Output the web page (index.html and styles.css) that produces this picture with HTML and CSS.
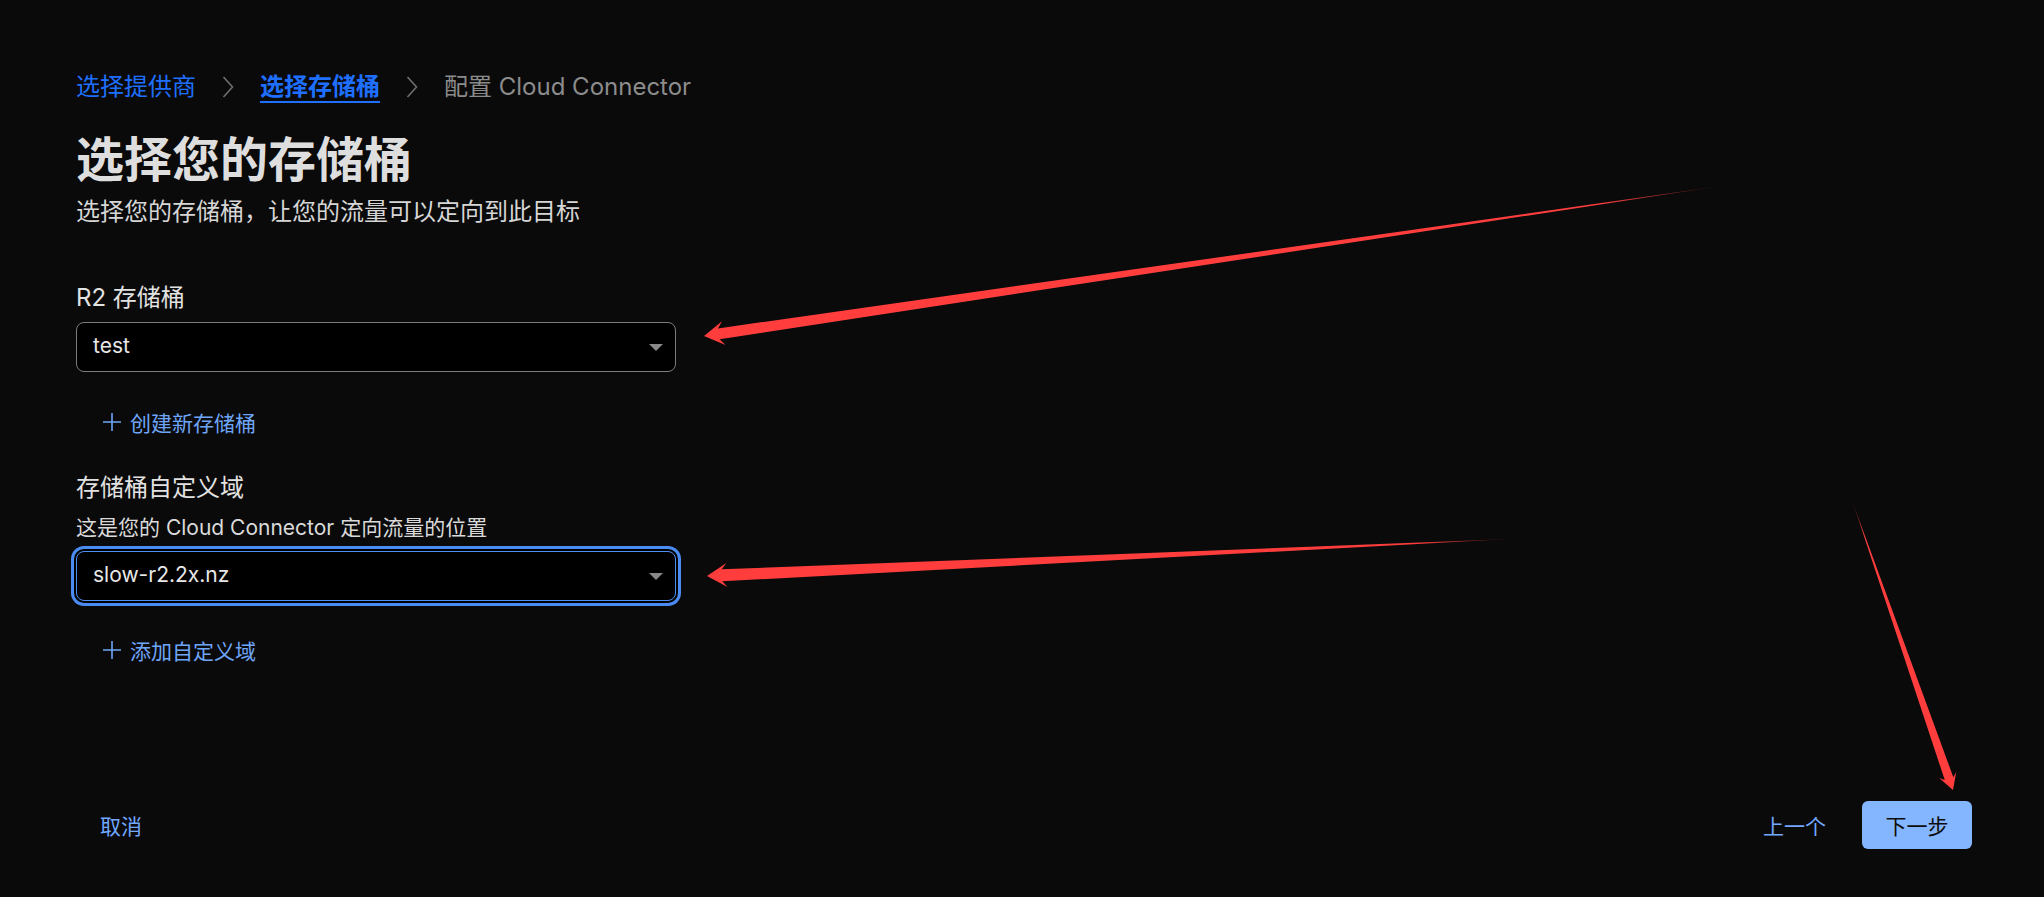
FILE: index.html
```html
<!DOCTYPE html>
<html lang="zh-CN">
<head>
<meta charset="utf-8">
<title>选择您的存储桶</title>
<link rel="stylesheet" href="styles.css">
</head>
<body>
<div class="page">
  <main class="main">
    <nav class="crumbs">
      <a class="crumb crumb-link">选择提供商</a>
      <svg class="chev" width="12" height="24" viewBox="0 0 12 24"><path d="M1.5 2 L10.5 12 L1.5 22" fill="none" stroke="#6f6f6f" stroke-width="1.6"/></svg>
      <a class="crumb crumb-active">选择存储桶</a>
      <svg class="chev" width="12" height="24" viewBox="0 0 12 24"><path d="M1.5 2 L10.5 12 L1.5 22" fill="none" stroke="#6f6f6f" stroke-width="1.6"/></svg>
      <span class="crumb crumb-muted">配置 Cloud Connector</span>
    </nav>

    <h1 class="title">选择您的存储桶</h1>
    <p class="subtitle">选择您的存储桶，让您的流量可以定向到此目标</p>

    <section class="field field-first">
      <div class="label">R2 存储桶</div>
      <div class="select">
        <span class="select-value">test</span>
        <span class="caret"></span>
      </div>
      <button class="add-link">
        <svg width="20" height="20" viewBox="0 0 20 20"><path d="M10 1 V19 M1 10 H19" stroke="#6fa5f8" stroke-width="1.6" fill="none"/></svg>
        <span>创建新存储桶</span>
      </button>
    </section>

    <section class="field">
      <div class="label">存储桶自定义域</div>
      <div class="desc">这是您的 Cloud Connector 定向流量的位置</div>
      <div class="select select-focus">
        <span class="select-value">slow-r2.2x.nz</span>
        <span class="caret"></span>
      </div>
      <button class="add-link add-link-2">
        <svg width="20" height="20" viewBox="0 0 20 20"><path d="M10 1 V19 M1 10 H19" stroke="#6fa5f8" stroke-width="1.6" fill="none"/></svg>
        <span>添加自定义域</span>
      </button>
    </section>
  </main>

  <footer class="footer">
    <button class="btn btn-text">取消</button>
    <div class="footer-right">
      <button class="btn btn-text">上一个</button>
      <button class="btn btn-primary">下一步</button>
    </div>
  </footer>
</div>

<svg class="annot" width="2044" height="897" viewBox="0 0 2044 897">
  <defs>
    <linearGradient id="g1" gradientUnits="userSpaceOnUse" x1="1721" y1="186" x2="704" y2="336">
      <stop offset="0" stop-color="#ff3d3d" stop-opacity="0.2"/>
      <stop offset="0.12" stop-color="#ff3d3d" stop-opacity="1"/>
      <stop offset="1" stop-color="#ff3d3d"/>
    </linearGradient>
    <linearGradient id="g2" gradientUnits="userSpaceOnUse" x1="1510" y1="539" x2="707" y2="576">
      <stop offset="0" stop-color="#ff3d3d" stop-opacity="0.2"/>
      <stop offset="0.12" stop-color="#ff3d3d" stop-opacity="1"/>
      <stop offset="1" stop-color="#ff3d3d"/>
    </linearGradient>
    <linearGradient id="g3" gradientUnits="userSpaceOnUse" x1="1853" y1="503" x2="1953" y2="790">
      <stop offset="0" stop-color="#ff3d3d" stop-opacity="0.2"/>
      <stop offset="0.12" stop-color="#ff3d3d" stop-opacity="1"/>
      <stop offset="1" stop-color="#ff3d3d"/>
    </linearGradient>
  </defs>
  <polygon fill="url(#g1)" points="704,336 722,321.2 718,328.4 1721,186 719.6,339.2 725.5,345"/>
  <polygon fill="url(#g2)" points="707,576 726.4,563.1 721.7,569.3 1510,539 722.3,581.3 727.5,587.1"/>
  <polygon fill="url(#g3)" points="1953,790 1939.2,777.9 1944.8,780.1 1853,503 1953.3,777.2 1956.2,771.9"/>
</svg>
</body>
</html>
```

FILE: styles.css
```css
* {
  box-sizing: border-box;
}

html, body {
  margin: 0;
  padding: 0;
  background: #0a0a0a;
}

body {
  position: relative;
  font-family: Inter, "Noto Sans CJK SC", sans-serif;
  color: #e0e0e0;
  overflow: hidden;
}

.page {
  min-height: 897px;
  height: 897px;
  display: flex;
  flex-direction: column;
  padding: 73px 72px 48px 76px;
}

.main {
  flex: 1;
}

.crumbs {
  display: flex;
  align-items: flex-start;
  gap: 26px;
  font-size: 24px;
  line-height: 28px;
  height: 30px;
}

.chev {
  margin-top: 2px;
}

.crumb {
  display: block;
  height: 30px;
  white-space: nowrap;
}

.crumb-link {
  color: #1f6fff;
}

.crumb-active {
  color: #1f6fff;
  font-weight: 700;
  border-bottom: 2px solid #1f6fff;
}

.crumb-muted {
  color: #8c8c8c;
}

.title {
  margin: 29px 0 0;
  font-size: 48px;
  line-height: 56px;
  font-weight: 700;
  color: #dedede;
}

.subtitle {
  margin: 8px 0 0;
  font-size: 24px;
  line-height: 32px;
  color: #d6d6d6;
}

.field {
  margin-top: 26px;
}

.field-first {
  margin-top: 54px;
}

.label {
  font-size: 24px;
  line-height: 32px;
  color: #e2e2e2;
}

.desc {
  margin-top: 10px;
  font-size: 21px;
  line-height: 28px;
  color: #dadada;
}

.select {
  margin-top: 8px;
  width: 600px;
  height: 50px;
  border: 1px solid #7c7c7c;
  border-radius: 8px;
  background: #000;
  display: flex;
  align-items: center;
  justify-content: space-between;
  padding: 0 12px 0 16px;
}

.desc + .select {
  margin-top: 9px;
}

.select-focus {
  border-color: #4d8ff2;
  box-shadow: 0 0 0 2px #000, 0 0 0 5px #4a8cf2;
}

.select-value {
  font-size: 21px;
  color: #e8e8e8;
  line-height: 28px;
  margin-top: -2px;
}

.caret {
  width: 0;
  height: 0;
  border-left: 7px solid transparent;
  border-right: 7px solid transparent;
  border-top: 7px solid #8a8a8a;
}

.add-link {
  margin-top: 26px;
  height: 48px;
  display: flex;
  align-items: center;
  gap: 8px;
  padding: 0 24px 0 26px;
  background: none;
  border: none;
  font-family: inherit;
  font-size: 21px;
  color: #6fa5f8;
  cursor: pointer;
}

.add-link-2 {
  margin-top: 25px;
}

.footer {
  display: flex;
  justify-content: space-between;
  align-items: center;
  height: 48px;
}

.footer-right {
  display: flex;
  align-items: center;
  gap: 12px;
}

.btn {
  height: 48px;
  padding: 0 24px;
  border: none;
  border-radius: 6px;
  font-family: inherit;
  font-size: 21px;
  white-space: nowrap;
  cursor: pointer;
}

.btn-text {
  background: none;
  color: #72a8ff;
}

.btn-primary {
  background: #84b6ff;
  color: #0c0c0c;
  padding: 0 23px;
  width: 110px;
}

.annot {
  position: absolute;
  top: 0;
  left: 0;
  pointer-events: none;
}
```
